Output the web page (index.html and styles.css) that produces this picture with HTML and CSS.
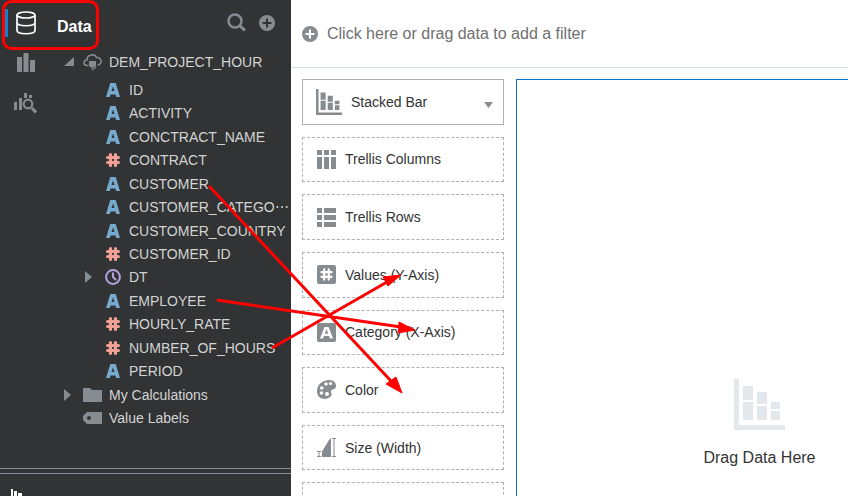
FILE: index.html
```html
<!DOCTYPE html>
<html lang="en">
<head>
<meta charset="utf-8">
<title>Data</title>
<link rel="stylesheet" href="styles.css">
</head>
<body>
<svg class="defs" aria-hidden="true">
  <symbol id="text-type" viewBox="0 0 14 14"><path d="M0 14 4.300 0h5.400L14 14h-3.800l-.8-2.600H4.600L3.800 14zM5.500 8h3L7 3.500z" fill-rule="evenodd"/></symbol>
  <symbol id="number-type" viewBox="0 0 14 14"><path d="M4.500 1.600v10.800M9.500 1.600v10.800M1.600 4.500h10.800M1.600 9.500h10.800" fill="none" stroke="currentColor" stroke-width="3.200" stroke-linecap="round"/></symbol>
  <symbol id="stacked" viewBox="0 0 51 51"><path d="M0 0h5v46h46v5H0zM9 7h10v14H9zM9 23h10v18H9zM23 13h10v12H23zM23 27h10v14H23zM37 23h9v7h-9zM37 32h9v9h-9z"/></symbol>
  <symbol id="plus" viewBox="0 0 16 16"><path fill-rule="evenodd" d="M8 0a8 8 0 1 0 0 16A8 8 0 0 0 8 0M7 3.500h2V7h3.500v2H9v3.500H7V9H3.500V7H7z"/></symbol>
</svg>
<div class="app">
  <aside class="sidebar">
    <div class="explorer">
      <nav class="rail">
        <button class="rail-btn active" aria-label="Data">
          <svg width="20" height="24" viewBox="0 0 20 24"><g fill="none" stroke="#fff" stroke-width="1.700"><ellipse cx="10" cy="4" rx="9" ry="3"/><path d="M1 4v15.500c0 4.300 18 4.300 18 0V4M1 11.500c0 4.300 18 4.300 18 0"/></g></svg>
        </button>
        <button class="rail-btn" aria-label="Visualizations">
          <svg width="20" height="20" viewBox="0 0 20 20"><path d="M1 4h5v15H1zM7.500 0h5v19h-5zM14 7h5v12h-5z"/></svg>
        </button>
        <button class="rail-btn" aria-label="Analytics">
          <svg width="24" height="22" viewBox="0 0 24 22"><path d="M0 10h3v8H0zM5 6h3v12H5zM10 1h3v5h-3zM15 3h3v3h-3z"/><circle cx="14" cy="12" r="4.300" fill="none" stroke="currentColor" stroke-width="2.200"/><path d="m18 16 4 4.500" stroke="currentColor" stroke-width="3.200"/></svg>
        </button>
      </nav>
      <div class="panel">
        <header class="panel-head">
          <h1>Data</h1>
          <button class="tool" aria-label="Search"><svg width="20" height="20" viewBox="0 0 20 20"><circle cx="8" cy="8" r="6.500" fill="none" stroke="currentColor" stroke-width="2.500"/><path d="m12.500 12.500 5.500 5" stroke="currentColor" stroke-width="3"/></svg></button>
          <button class="tool" aria-label="Add"><svg width="16" height="16"><use href="#plus"/></svg></button>
        </header>
        <ul class="tree">
          <li class="row"><span class="caret"><svg width="10" height="10"><path d="M10 0v9H0z"/></svg></span><span class="icon"><svg width="19" height="17" viewBox="0 0 19 17"><path d="M5.500 11.500H4C0 11.500 0 6 4 6c0-6 8-6.500 9.500-2.500 4-.5 6 4 3.500 6.500-1 1-1.500 1-2.500 1.200" fill="none" stroke="currentColor" stroke-width="1.500"/><path d="M6 7h7v5c-1.500 1.500-5.500 1.500-7 0z"/><path d="m8 14 4-3m-3 5 4-3" stroke="currentColor" stroke-width="1.500"/></svg></span><span>DEM_PROJECT_HOUR</span></li>
          <li class="row field"><span class="caret"></span><span class="icon text"><svg width="14" height="14"><use href="#text-type"/></svg></span><span>ID</span></li>
          <li class="row field"><span class="caret"></span><span class="icon text"><svg width="14" height="14"><use href="#text-type"/></svg></span><span>ACTIVITY</span></li>
          <li class="row field"><span class="caret"></span><span class="icon text"><svg width="14" height="14"><use href="#text-type"/></svg></span><span>CONCTRACT_NAME</span></li>
          <li class="row field"><span class="caret"></span><span class="icon number"><svg width="14" height="14"><use href="#number-type"/></svg></span><span>CONTRACT</span></li>
          <li class="row field"><span class="caret"></span><span class="icon text"><svg width="14" height="14"><use href="#text-type"/></svg></span><span>CUSTOMER</span></li>
          <li class="row field"><span class="caret"></span><span class="icon text"><svg width="14" height="14"><use href="#text-type"/></svg></span><span>CUSTOMER_CATEGO⋯</span></li>
          <li class="row field"><span class="caret"></span><span class="icon text"><svg width="14" height="14"><use href="#text-type"/></svg></span><span>CUSTOMER_COUNTRY</span></li>
          <li class="row field"><span class="caret"></span><span class="icon number"><svg width="14" height="14"><use href="#number-type"/></svg></span><span>CUSTOMER_ID</span></li>
          <li class="row field"><span class="caret"><svg width="8" height="12"><path d="M0 0v12l7-6z"/></svg></span><span class="icon time"><svg width="16" height="16" viewBox="0 0 16 16"><g fill="none" stroke="currentColor" stroke-width="2"><circle cx="8" cy="8" r="6.900"/><path d="M8 3.500V8l3 3"/></g></svg></span><span>DT</span></li>
          <li class="row field"><span class="caret"></span><span class="icon text"><svg width="14" height="14"><use href="#text-type"/></svg></span><span>EMPLOYEE</span></li>
          <li class="row field"><span class="caret"></span><span class="icon number"><svg width="14" height="14"><use href="#number-type"/></svg></span><span>HOURLY_RATE</span></li>
          <li class="row field"><span class="caret"></span><span class="icon number"><svg width="14" height="14"><use href="#number-type"/></svg></span><span>NUMBER_OF_HOURS</span></li>
          <li class="row field"><span class="caret"></span><span class="icon text"><svg width="14" height="14"><use href="#text-type"/></svg></span><span>PERIOD</span></li>
          <li class="row"><span class="caret"><svg width="8" height="12"><path d="M0 0v12l7-6z"/></svg></span><span class="icon"><svg width="19" height="14"><path d="M0 0h7l2 2h10v12H0z"/></svg></span><span>My Calculations</span></li>
          <li class="row"><span class="caret"></span><span class="icon"><svg width="19" height="12"><path fill-rule="evenodd" d="M4 0h15v12H4L0 8V4zM6 4a2 2 0 1 0 0 4 2 2 0 0 0 0-4"/></svg></span><span>Value Labels</span></li>
        </ul>
      </div>
    </div>
    <div class="splitter"></div>
    <div class="properties">
      <svg width="12" height="12" viewBox="0 0 12 12"><path d="M0 0h2v12H0zM3 2h3v10H3zM7 4h4v8H7z"/></svg>
    </div>
  </aside>
  <main class="main">
    <button class="filter-bar"><svg width="16" height="16"><use href="#plus"/></svg>Click here or drag data to add a filter</button>
    <div class="workspace">
      <div class="grammar">
        <div class="chart-type">
          <svg width="26" height="26"><use href="#stacked"/></svg>
          <select aria-label="Visualization type"><option>Stacked Bar</option></select>
          <svg class="chevron" width="9" height="6"><path d="M0 0h9L4.500 6z"/></svg>
        </div>
        <div class="drop"><svg width="19" height="19"><path d="M0 0h5v5H0zM7 0h5v5H7zM14 0h5v5h-5zM0 7h5v12H0zM7 7h5v12H7zM14 7h5v12h-5z"/></svg>Trellis Columns</div>
        <div class="drop"><svg width="19" height="19"><path d="M0 0h5v5H0zM0 7h5v5H0zM0 14h5v5H0zM7 0h12v5H7zM7 7h12v5H7zM7 14h12v5H7z"/></svg>Trellis Rows</div>
        <div class="drop"><svg width="19" height="19"><rect width="19" height="19" rx="2"/><path d="M7.200 4.500v10M11.800 4.500v10M4.500 7.200h10M4.500 11.800h10" fill="none" stroke="#fff" stroke-width="2.300" stroke-linecap="round"/></svg>Values (Y-Axis)</div>
        <div class="drop"><svg width="19" height="19"><rect width="19" height="19" rx="2"/><path d="M3 15.500 7.500 4h4L16 15.500h-3.100l-.8-2.500H6.900l-.8 2.500zM7.700 10.700h3.600L9.500 6z" fill="#fff" fill-rule="evenodd"/></svg>Category (X-Axis)</div>
        <div class="drop"><svg width="19" height="19"><path d="M12 0C5 0 0 5 0 11c0 9 10 10 14 5 2-3-1-3 0-5 .500-2 5-1 5-5 0-3-2-6-7-6"/><g fill="#fff"><circle cx="9" cy="4" r="1.700"/><circle cx="13.500" cy="3.500" r="1.600"/><circle cx="4.800" cy="8" r="1.800"/><circle cx="4.500" cy="13" r="1.800"/><circle cx="10" cy="14" r="2"/></g></svg>Color</div>
        <div class="drop"><svg width="19" height="19"><path d="M5 19v-5.500L12 2l2-2v19z"/><path d="M0 13.500h4M0 18.500h4M2 13.500v5M15 .5h4M15 18.500h4M17 .5v18" fill="none" stroke="currentColor"/></svg>Size (Width)</div>
        <div class="drop"></div>
      </div>
      <section class="canvas">
        <svg width="51" height="51"><use href="#stacked"/></svg>
        <p>Drag Data Here</p>
      </section>
    </div>
  </main>
  <svg class="annotations" width="848" height="496" viewBox="0 0 848 496" aria-hidden="true">
    <rect x="3.500" y="1.500" width="94" height="47" rx="8"/>
    <path d="M209 186 391 381M217 300l184 27M272 348l115-66"/>
    <path class="head" d="m402 393-16-9 10-7zM415 330l-17 3 1-11zM401 275l-13 11-5-9z"/>
  </svg>
</div>
</body>
</html>
```

FILE: styles.css
```css
* { box-sizing: border-box; }
body { margin: 0; overflow: hidden; font: 14px/16px "Liberation Sans", Arial, sans-serif; color: #333; background: #fff; }
svg { display: block; fill: currentColor; flex: none; }
button { border: 0; padding: 0; background: none; font: inherit; color: inherit; }
.defs { position: absolute; width: 0; height: 0; }
.app { position: relative; display: flex; height: 100vh; overflow: hidden; }

.sidebar { flex: 0 0 291px; display: flex; flex-direction: column; background: #313335; color: #878c91; }
.explorer { flex: 1; display: flex; min-height: 0; }
.rail { flex: 0 0 48px; display: flex; flex-direction: column; align-items: flex-start; padding-top: 9px; gap: 12px; }
.rail-btn { display: flex; align-items: center; justify-content: center; width: 38px; height: 28px; margin-left: 5px; border-left: 3px solid transparent; }
.rail-btn.active { border-color: #0b85cf; }
.panel { flex: 1; min-width: 0; }
.panel-head { display: flex; align-items: center; gap: 12px; height: 46px; padding: 0 16px 0 9px; }
.panel-head h1 { flex: 1; margin: 8px 0 0; font-size: 16px; line-height: 20px; color: #fff; }
.tree { display: grid; grid-template-rows: 32px; grid-auto-rows: 1fr; height: 384px; margin: 0; padding: 0; list-style: none; }
.row { display: flex; align-items: center; padding-left: 14px; color: #d3d3d3; white-space: nowrap; }
.row.field { padding-left: 35px; }
.caret { flex: 0 0 21px; padding-left: 2px; color: #878c91; }
.icon { flex: 0 0 26px; color: #878c91; }
.field .icon { flex-basis: 25px; padding-left: 2px; }
.icon.text { color: #75a9cd; }
.icon.number { color: #f0a095; }
.field .icon.time { color: #b5a3dc; padding-left: 1px; }
.splitter { flex: 0 0 6px; border-top: 1px solid #8a8d94; border-bottom: 1px solid #8a8d94; }
.properties { flex: 0 0 22px; padding: 15px 0 0 11px; color: #fff; overflow: hidden; }

.main { flex: 1; min-width: 0; display: flex; flex-direction: column; }
.filter-bar { flex: 0 0 68px; display: flex; align-items: center; gap: 9px; padding-left: 11px; border-bottom: 1px solid #d9dee3; font-size: 16px; color: #707070; text-align: left; }
.filter-bar svg { color: #878c91; }
.workspace { flex: 1; display: flex; gap: 12px; padding: 11px 0 0 11px; min-height: 0; }
.grammar { flex: 0 0 202px; display: grid; grid-auto-rows: 1fr; gap: 12px; height: 449px; }
.chart-type, .drop { display: flex; align-items: center; padding-left: 14px; gap: 9px; border: 1px dashed #b0b0b0; }
.chart-type { position: relative; padding-left: 13px; border-style: solid; }
.chart-type svg, .drop svg { color: #878c91; }
.chart-type select { flex: 1; height: 100%; appearance: none; border: 0; padding: 0; background: none; font: inherit; color: inherit; }
.chart-type .chevron { position: absolute; right: 10px; top: 22px; pointer-events: none; }
.canvas { flex: 1; height: 500px; margin-right: -155px; padding-top: 299px; border: 1px solid #0572ce; display: flex; flex-direction: column; align-items: center; gap: 18px; color: #e3e8ec; }
.canvas p { margin: 0; font-size: 16px; line-height: 20px; color: #333; }

.annotations { position: absolute; left: 0; top: 0; pointer-events: none; fill: none; stroke: #f00; stroke-width: 3; }
.annotations .head { fill: #f00; stroke-width: 1; }
```
